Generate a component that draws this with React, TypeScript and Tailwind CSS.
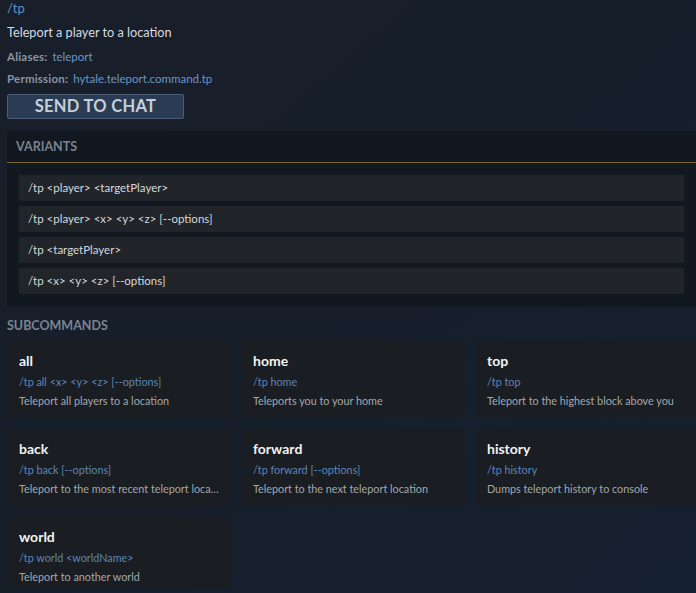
const variants = [
  "/tp <player> <targetPlayer>",
  "/tp <player> <x> <y> <z> [--options]",
  "/tp <targetPlayer>",
  "/tp <x> <y> <z> [--options]",
];

const subcommands = [
  { name: "all", usage: "/tp all <x> <y> <z> [--options]", desc: "Teleport all players to a location" },
  { name: "home", usage: "/tp home", desc: "Teleports you to your home" },
  { name: "top", usage: "/tp top", desc: "Teleport to the highest block above you" },
  { name: "back", usage: "/tp back [--options]", desc: "Teleport to the most recent teleport location" },
  { name: "forward", usage: "/tp forward [--options]", desc: "Teleport to the next teleport location" },
  { name: "history", usage: "/tp history", desc: "Dumps teleport history to console" },
  { name: "world", usage: "/tp world <worldName>", desc: "Teleport to another world" },
];

export default function App() {
  return (
    <div
      className="w-[696px] h-[593px] overflow-hidden bg-gradient-to-br from-[#181f2a] via-[#161e2a] to-[#152030]"
      style={{ fontFamily: "Lato, 'Noto Sans', sans-serif" }}
    >
      <div className="w-[700px] pl-[7px]">
        <div className="text-[13px] leading-[16px] text-[#5f8fc6]">/tp</div>
        <div className="mt-[8px] text-[12.7px] leading-[16px] text-[#d6dbe1]">Teleport a player to a location</div>
        <div className="mt-[9px] flex gap-[5px] text-[11.5px] leading-[15px]">
          <span className="font-bold tracking-[0.2px] text-[#8b95a2]">Aliases:</span>
          <span className="text-[#6a95c6]">teleport</span>
        </div>
        <div className="mt-[7px] flex gap-[5px] text-[11.5px] leading-[15px]">
          <span className="font-bold tracking-[0.2px] text-[#8b95a2]">Permission:</span>
          <span className="text-[#6a95c6]">hytale.teleport.command.tp</span>
        </div>
        <button className="mt-[8px] w-[177px] h-[25px] rounded-[2px] border border-[#4c5f77] bg-[#2a3c53] text-[16.5px] font-bold tracking-[0.3px] text-[#c6ced8] leading-none">
          SEND TO CHAT
        </button>

        <div className="mt-[12px] w-[693px] bg-[#12181f]">
          <div className="h-[31px] flex items-center pt-[1px] px-[9px] text-[12.5px] font-bold text-[#79838f]">
            VARIANTS
          </div>
          <div className="h-[1px] bg-[#7d6526]" />
          <div className="pl-[12px] pr-[16px] pt-[12px] pb-[13px] flex flex-col gap-[5px]">
            {variants.map((v) => (
              <div key={v} className="h-[26px] flex items-center pl-[9px] bg-[#212428] text-[11.5px] text-[#d3d7dc]">
                {v}
              </div>
            ))}
          </div>
        </div>

        <div className="mt-[11px] text-[12.5px] font-bold text-[#7a8491] leading-[15px]">SUBCOMMANDS</div>
        <div className="mt-[8px] grid grid-cols-[225px_225px_225px] grid-rows-[77px_77px_70px] gap-x-[9px] gap-y-[11px]">
          {subcommands.map((s) => (
            <div key={s.name} className="bg-[#1a1d22] px-[12px] pt-[11px] overflow-hidden">
              <div className="text-[14px] font-bold leading-[18px] text-[#f1f3f5]">{s.name}</div>
              <div className="mt-[5px] text-[10.8px] leading-[14px] text-[#5c87b9]">{s.usage}</div>
              <div className="mt-[5px] text-[10.8px] leading-[14px] text-[#a3a8ae] truncate">{s.desc}</div>
            </div>
          ))}
        </div>
      </div>
    </div>
  );
}
